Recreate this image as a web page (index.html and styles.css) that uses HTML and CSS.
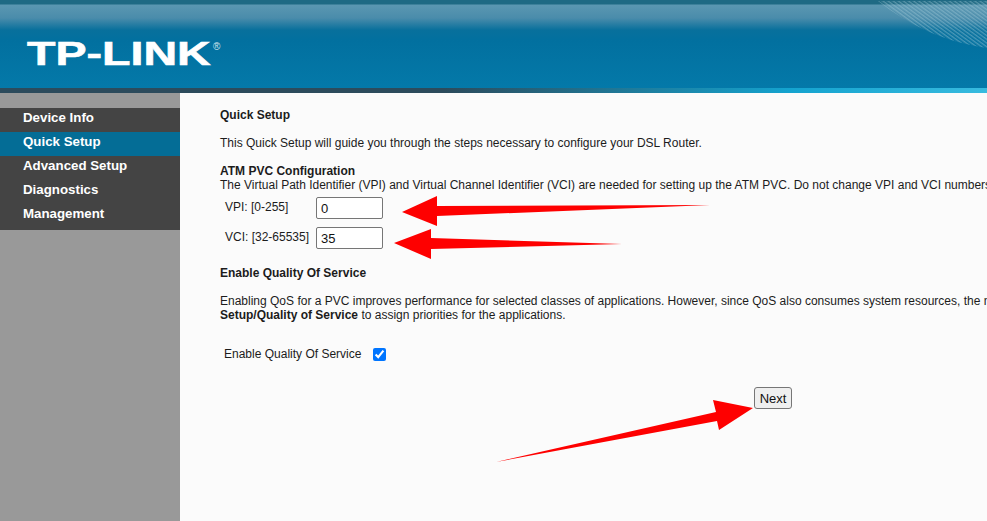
FILE: index.html
```html
<!DOCTYPE html>
<html lang="en">
<head>
  <meta charset="UTF-8" />
  <title>Quick Setup</title>
  <link rel="stylesheet" href="styles.css">
</head>
<body>

<header class="top-bar">
  <svg class="top-waves" width="237" height="60" viewBox="0 0 237 60">
    <defs>
      <pattern id="wave-lines" width="3" height="3" patternUnits="userSpaceOnUse" patternTransform="rotate(36)">
        <rect width="3" height="1.4" fill="#a9cfdc" fill-opacity="0.42" />
      </pattern>
    </defs>
    <path d="M128 1 C160 26 195 42 237 48 L237 1 Z" fill="url(#wave-lines)" />
  </svg>
  <div class="logo"><span class="logo-text">TP-LINK</span><span class="logo-reg">®</span></div>
</header>

<div class="page">
  <nav class="side-menu">
    <ul>
      <li><a href="#">Device Info</a></li>
      <li class="active"><a href="#">Quick Setup</a></li>
      <li><a href="#">Advanced Setup</a></li>
      <li><a href="#">Diagnostics</a></li>
      <li><a href="#">Management</a></li>
    </ul>
  </nav>

  <main class="content">
    <h4 class="title">Quick Setup</h4>
    <p class="intro">This Quick Setup will guide you through the steps necessary to configure your DSL Router.</p>

    <h4>ATM PVC Configuration</h4>
    <p>The Virtual Path Identifier (VPI) and Virtual Channel Identifier (VCI) are needed for setting up the ATM PVC. Do not change VPI and VCI numbers unless your ISP instructs you otherwise.</p>

    <div class="pvc-form">
      <label for="vpi">VPI: [0-255]</label>
      <input type="text" id="vpi" value="0" />
      <label for="vci">VCI: [32-65535]</label>
      <input type="text" id="vci" value="35" />
    </div>

    <h4 class="qos-title">Enable Quality Of Service</h4>
    <p class="qos-text">Enabling QoS for a PVC improves performance for selected classes of applications. However, since QoS also consumes system resources, the number of PVCs will be reduced. Use <b>Advanced</b><br><b>Setup/Quality of Service</b> to assign priorities for the applications.</p>

    <div class="qos-check">
      <label for="qos">Enable Quality Of Service</label>
      <input type="checkbox" id="qos" checked />
    </div>

    <div class="actions">
      <button type="button">Next</button>
    </div>
  </main>
</div>

<!-- red arrows drawn over the screenshot -->
<svg class="arrows" width="987" height="521" viewBox="0 0 987 521">
  <polygon points="402,212 437,196 437,206 710,205 437,216 437,226" fill="#fe0000" />
  <polygon points="394,243 431,229 431,238 622,244 431,249 431,259" fill="#fe0000" />
  <polygon points="753,408 713,400 716,412 496,462 717,421 719,430" fill="#fe0000" />
</svg>

</body>
</html>
```

FILE: styles.css
```css
html, body {
  height: 100%;
}

body {
  font-family: 'Liberation Sans', Arial, sans-serif;
  font-size: 12px;
  line-height: 14px;
  color: #1c1c1c;
  background: #fbfbfb;
  margin: 0;
  overflow: hidden;
  position: relative;
}

.top-bar {
  height: 93px;
  box-sizing: border-box;
  position: relative;
  overflow: hidden;
  background:
    linear-gradient(to right, #2c4b5c 0, #2c4b5c 45%, #14a3cf 80%, #38bbdf 100%) bottom / 100% 5px no-repeat,
    linear-gradient(to bottom, #1f6a84 0, #1f6a84 4px, #5b97b1 5px, #4a8cab 18px, #08709c 30px, #02709f 40px, #0479a9 88px);
}

.top-waves {
  position: absolute;
  top: 0;
  right: 0;
}

.logo {
  display: flex;
  align-items: flex-start;
  padding: 35px 0 0 27px;
  color: #fff;
}

.logo-text {
  font-size: 34px;
  line-height: 36px;
  font-weight: bold;
  -webkit-text-stroke: 0.6px #fff;
  transform: scaleX(1.37);
  transform-origin: left;
  width: 186px;
}

.logo-reg {
  font-size: 10px;
  line-height: 12px;
  margin-top: 6px;
  color: #d5e6ee;
}

.page {
  display: flex;
  height: calc(100% - 93px);
}

.side-menu {
  width: 180px;
  flex-shrink: 0;
  background: #999;
  padding-top: 15px;
}

.side-menu ul {
  list-style: none;
  margin: 0;
  padding: 0 0 2px;
  background: #444;
}

.side-menu li {
  height: 24px;
}

.side-menu li.active {
  background: #046d96;
}

.side-menu a {
  display: block;
  padding-left: 23px;
  font-size: 13.3px;
  line-height: 19px;
  font-weight: bold;
  color: #fff;
  text-decoration: none;
}

.content {
  flex: 1;
  min-width: 0;
  padding: 15px 0 0 40px;
  white-space: nowrap;
  overflow: hidden;
}

h4 {
  margin: 0;
  font-size: 12px;
  line-height: 14px;
}

p {
  margin: 0;
}

.intro {
  margin: 14px 0;
}

.pvc-form {
  display: grid;
  grid-template-columns: 91px 67px;
  grid-auto-rows: 22px;
  row-gap: 8px;
  align-items: center;
  margin: 5px 0 0 5px;
}

.pvc-form label {
  margin-bottom: 2px;
}

.pvc-form input {
  box-sizing: border-box;
  width: 67px;
  height: 22px;
  padding: 1px 4px;
  border: 1px solid #767676;
  border-radius: 2px;
  font: 13px 'Liberation Sans', Arial, sans-serif;
  color: #111;
  background: #fff;
}

.qos-title {
  margin-top: 17px;
}

.qos-text {
  margin-top: 14px;
}

.qos-check {
  display: flex;
  align-items: center;
  margin: 25px 0 0 4px;
}

.qos-check input {
  width: 13px;
  height: 13px;
  margin: 0 0 0 12px;
}

.actions {
  margin: 26px 0 0 534px;
}

.actions button {
  box-sizing: border-box;
  width: 38px;
  height: 22px;
  padding: 0;
  border: 1px solid #767676;
  border-radius: 3px;
  background: #efefef;
  color: #111;
  font: 13px 'Liberation Sans', Arial, sans-serif;
}

.arrows {
  position: absolute;
  top: 0;
  left: 0;
  pointer-events: none;
}
```
